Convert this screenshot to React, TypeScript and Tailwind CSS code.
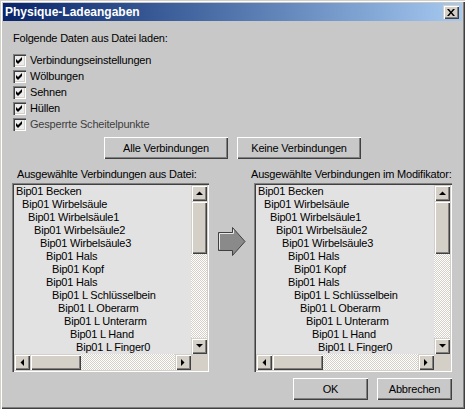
import React from "react";

const items: [string, number][] = [
  ["Bip01 Becken", 0],
  ["Bip01 Wirbelsäule", 1],
  ["Bip01 Wirbelsäule1", 2],
  ["Bip01 Wirbelsäule2", 3],
  ["Bip01 Wirbelsäule3", 4],
  ["Bip01 Hals", 5],
  ["Bip01 Kopf", 6],
  ["Bip01 Hals", 5],
  ["Bip01 L Schlüsselbein", 6],
  ["Bip01 L Oberarm", 7],
  ["Bip01 L Unterarm", 8],
  ["Bip01 L Hand", 9],
  ["Bip01 L Finger0", 10],
];

const raised =
  "shadow-[inset_1px_1px_0_#ffffff,inset_-1px_-1px_0_#404040,inset_-2px_-2px_0_#808080]";
const raisedSb =
  "shadow-[inset_1px_1px_0_#d4d0c8,inset_2px_2px_0_#ffffff,inset_-1px_-1px_0_#404040,inset_-2px_-2px_0_#808080]";
const sunken =
  "shadow-[inset_1px_1px_0_#808080,inset_2px_2px_0_#404040,inset_-1px_-1px_0_#ffffff,inset_-2px_-2px_0_#d4d0c8]";
const track =
  "bg-[repeating-conic-gradient(#d4d0c8_0%_25%,#ffffff_0%_50%)] bg-[length:2px_2px]";

function Tri({ dir }: { dir: "up" | "down" | "left" | "right" }) {
  const pts =
    dir === "up"
      ? "0,4 7,4 3.5,0.5"
      : dir === "down"
      ? "0,0 7,0 3.5,3.5"
      : dir === "left"
      ? "4,0 4,7 0.5,3.5"
      : "0,0 0,7 3.5,3.5";
  const w = dir === "up" || dir === "down" ? 7 : 4;
  const h = dir === "up" || dir === "down" ? 4 : 7;
  return (
    <svg width={w} height={h} viewBox={`0 0 ${w} ${h}`}>
      <polygon points={pts} fill="#000" />
    </svg>
  );
}

function SbBtn({ dir }: { dir: "up" | "down" | "left" | "right" }) {
  return (
    <div className={`w-[16px] h-[16px] bg-[#d4d0c8] flex items-center justify-center ${raisedSb}`}>
      <Tri dir={dir} />
    </div>
  );
}

function Check() {
  return (
    <div className={`w-[13px] h-[13px] bg-[#ececec] p-[2px] ${sunken}`}>
      <svg width="9" height="9" viewBox="0 0 9 9">
        <polygon points="1,3 3,5 7,1 7,4 3,8 1,6" fill="#000" />
      </svg>
    </div>
  );
}

function ListBox({ width }: { width: string }) {
  return (
    <div className={`${width} h-[189px] p-[2px] bg-[#c8c8c8] ${sunken}`}>
      <div className="grid grid-cols-[1fr_16px] grid-rows-[1fr_16px] w-full h-full">
        <div className="bg-[#e2e2e2] overflow-hidden">
          {items.map(([t, l], i) => (
            <div
              key={i}
              className="h-[13px] leading-[13px] whitespace-nowrap"
              style={{ paddingLeft: 2 + l * 6 }}
            >
              {t}
            </div>
          ))}
        </div>
        <div className="flex flex-col">
          <SbBtn dir="up" />
          <div className={`h-[53px] bg-[#d4d0c8] ${raisedSb}`} />
          <div className={`flex-1 ${track}`} />
          <SbBtn dir="down" />
        </div>
        <div className="flex">
          <SbBtn dir="left" />
          <div className={`w-[51px] bg-[#d4d0c8] ${raisedSb}`} />
          <div className={`flex-1 ${track}`} />
          <SbBtn dir="right" />
        </div>
        <div className="bg-[#d4d0c8]" />
      </div>
    </div>
  );
}

function Btn({ label, w }: { label: string; w: string }) {
  return (
    <div className={`${w} h-[22px] bg-[#c8c8c8] flex items-center justify-center ${raised}`}>
      {label}
    </div>
  );
}

export default function App() {
  const checks = [
    "Verbindungseinstellungen",
    "Wölbungen",
    "Sehnen",
    "Hüllen",
    "Gesperrte Scheitelpunkte",
  ];
  return (
    <div
      className="w-[465px] h-[409px] p-[3px] bg-[#c8c8c8] text-black text-[11px] tracking-[-0.2px] font-['Liberation_Sans',Arial,sans-serif] shadow-[inset_1px_1px_0_#d4d0c8,inset_2px_2px_0_#ffffff,inset_-1px_-1px_0_#404040,inset_-2px_-2px_0_#808080] flex flex-col"
    >
      {/* Title bar */}
      <div className="h-[18px] flex items-center justify-between pl-[2px] pr-[3px] bg-gradient-to-r from-[#0a246a] to-[#a6caf0]">
        <span className="text-white font-bold text-[12px] tracking-normal leading-[18px]">
          Physique-Ladeangaben
        </span>
        <div className={`w-[16px] h-[14px] bg-[#d4d0c8] flex items-center justify-center ${raisedSb}`}>
          <svg width="8" height="7" viewBox="0 0 8 7">
            <path d="M0 0h2l2 2.5L6 0h2L5 3.5 8 7H6L4 4.5 2 7H0l3-3.5z" fill="#000" />
          </svg>
        </div>
      </div>

      {/* Heading */}
      <div className="ml-[10px] mt-[11px] leading-[13px] h-[13px]">
        Folgende Daten aus Datei laden:
      </div>

      {/* Checkboxes */}
      <div className="ml-[10px] mt-[7px] flex flex-col">
        {checks.map((c, i) => (
          <div key={c} className="h-[16px] flex items-center gap-[4px]">
            <Check />
            <span className={i === 4 ? "text-[#404040]" : ""}>{c}</span>
          </div>
        ))}
      </div>

      {/* Buttons */}
      <div className="mt-[5px] flex justify-center gap-[9px]">
        <Btn label="Alle Verbindungen" w="w-[124px]" />
        <Btn label="Keine Verbindungen" w="w-[124px]" />
      </div>

      {/* Lists */}
      <div className="mt-[9px] ml-[9px] flex">
        <div className="flex flex-col w-[197px]">
          <div className="ml-[5px] h-[13px] leading-[13px] whitespace-nowrap">
            Ausgewählte Verbindungen aus Datei:
          </div>
          <div className="mt-[2px]">
            <ListBox width="w-[197px]" />
          </div>
        </div>
        <div className="ml-[9px] w-[27px] pt-[59px]">
          <svg width="28" height="30" viewBox="0 0 28 30">
            <polygon
              points="0.5,5.5 14.5,5.5 14.5,0.5 27,14.5 14.5,28.5 14.5,23.5 0.5,23.5"
              fill="#8a8a8a"
              stroke="#404040"
              strokeWidth="1"
            />
            <polyline
              points="1.5,22.5 1.5,6.5 15.5,6.5 15.5,2.5"
              fill="none"
              stroke="#e8e8e8"
              strokeWidth="1"
            />
          </svg>
        </div>
        <div className="ml-[9px] flex flex-col w-[198px]">
          <div className="ml-[-3px] h-[13px] leading-[13px] whitespace-nowrap">
            Ausgewählte Verbindungen im Modifikator:
          </div>
          <div className="mt-[2px]">
            <ListBox width="w-[198px]" />
          </div>
        </div>
      </div>

      {/* OK / Cancel */}
      <div className="mt-[6px] mr-[10px] flex justify-end gap-[9px]">
        <Btn label="OK" w="w-[75px]" />
        <Btn label="Abbrechen" w="w-[75px]" />
      </div>
    </div>
  );
}
